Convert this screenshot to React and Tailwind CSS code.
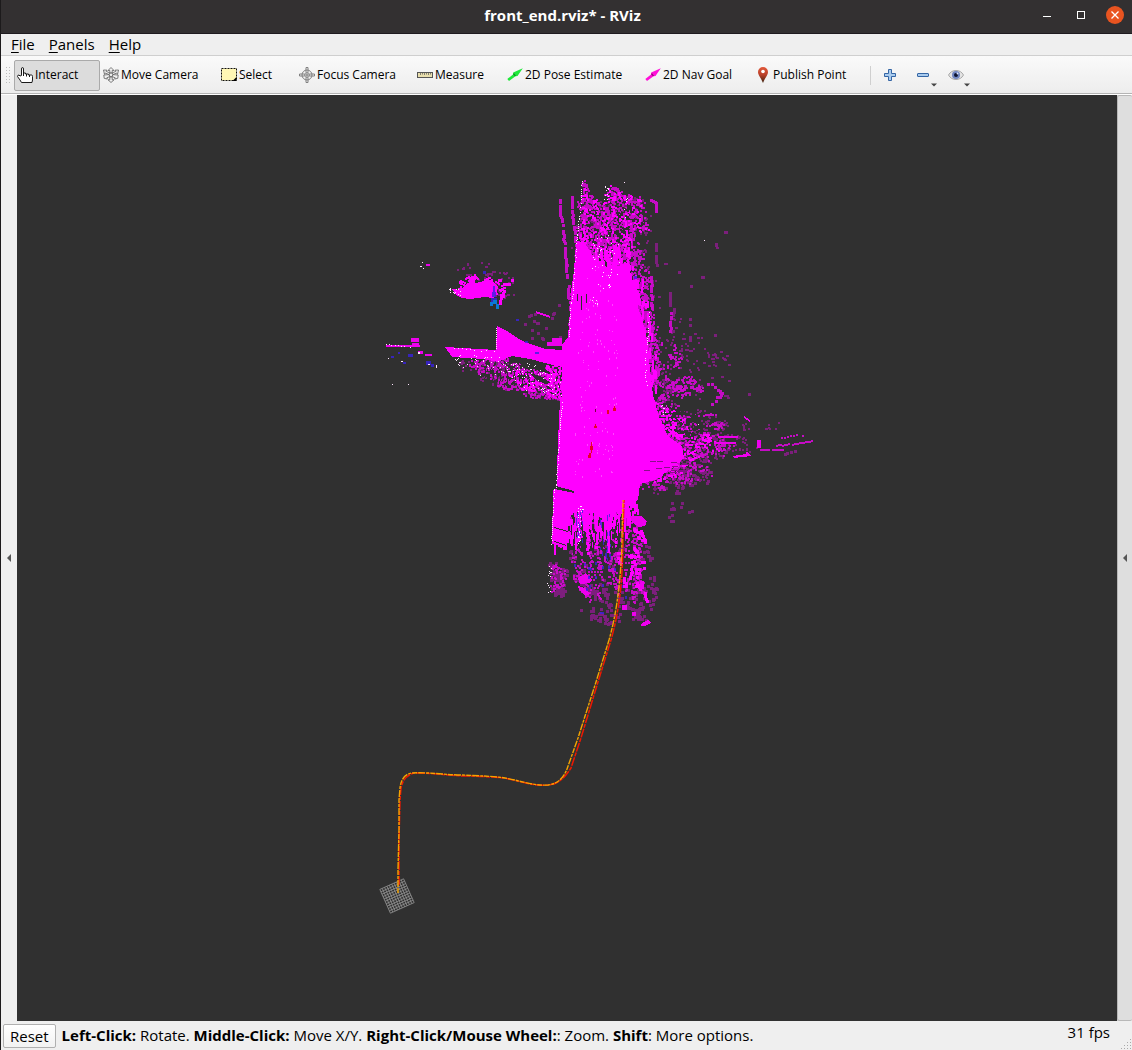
import React from "react";

/* ---------- seeded point cloud ---------- */
function makeRandom(seed) {
  let s = seed;
  return () => {
    s = (s + 0x6d2b79f5) | 0;
    let t = Math.imul(s ^ (s >>> 15), 1 | s);
    t = (t + Math.imul(t ^ (t >>> 7), 61 | t)) ^ t;
    return ((t ^ (t >>> 14)) >>> 0) / 4294967296;
  };
}

function inside(p, x, y) {
  let hit = false;
  for (let i = 0, j = p.length - 1; i < p.length; j = i++) {
    const [xi, yi] = p[i];
    const [xj, yj] = p[j];
    if (yi > y !== yj > y && x < ((xj - xi) * (y - yi)) / (yj - yi) + xi) hit = !hit;
  }
  return hit;
}

const parse = (s) => s.split(" ").map((q) => q.split(",").map(Number));

function bounds(p) {
  const xs = p.map((q) => q[0]);
  const ys = p.map((q) => q[1]);
  const x0 = Math.min(...xs);
  const y0 = Math.min(...ys);
  return [x0, y0, Math.max(...xs) - x0, Math.max(...ys) - y0];
}

function scatter(seed, poly, count, w = 2, h = 2, streak = 0) {
  const rnd = makeRandom(seed);
  const p = parse(poly);
  const [x0, y0, dx, dy] = bounds(p);
  let d = "";
  let n = 0;
  for (let k = 0; n < count && k < count * 12; k++) {
    const x = Math.round(x0 + rnd() * dx);
    const y = Math.round(y0 + rnd() * dy);
    const hh = h + Math.floor(rnd() * streak);
    if (!inside(p, x, y)) continue;
    d += `M${x} ${y}h${w}v${hh}h-${w}z`;
    n++;
  }
  return d;
}

/* small clumps of points, spread sx by sy around each centre */
function clumps(seed, poly, count, sx = 4, sy = 3, per = 5, size = 2) {
  const rnd = makeRandom(seed);
  const p = parse(poly);
  const [x0, y0, dx, dy] = bounds(p);
  let d = "";
  let n = 0;
  for (let k = 0; n < count && k < count * 12; k++) {
    const cx = x0 + rnd() * dx;
    const cy = y0 + rnd() * dy;
    if (!inside(p, cx, cy)) continue;
    n++;
    const m = 1 + Math.floor(rnd() * per);
    for (let i = 0; i < m; i++) {
      const x = Math.round(cx + (rnd() - 0.5) * sx * 2);
      const y = Math.round(cy + (rnd() - 0.5) * sy * 2);
      d += `M${x} ${y}h${size}v${size}h-${size}z`;
    }
  }
  return d;
}

/* points strewn along a polyline */
function trail(seed, line, step, jitter = 1, size = 1, keep = 0.8) {
  const rnd = makeRandom(seed);
  const p = parse(line);
  let d = "";
  for (let i = 1; i < p.length; i++) {
    const [ax, ay] = p[i - 1];
    const [bx, by] = p[i];
    const len = Math.hypot(bx - ax, by - ay);
    for (let t = 0; t < len; t += step) {
      if (rnd() > keep) continue;
      const x = Math.round(ax + ((bx - ax) * t) / len + (rnd() - 0.5) * jitter);
      const y = Math.round(ay + ((by - ay) * t) / len + (rnd() - 0.5) * jitter);
      d += `M${x} ${y}h${size}v${size}h-${size}z`;
    }
  }
  return d;
}

const BG = "#303030";
const HOT = "#ff00ff";
const MID = "#d20ad2";
const DIM = "#8a1c8a";

const CORE =
  "576,243 584,241 590,252 600,264 615,270 626,262 632,276 635,300 642,318 648,345 650,370 653,395 660,420 668,436 682,446 684,458 672,468 655,480 640,484 638,500 630,506 612,512 604,520 592,512 582,514 574,510 569,520 566,546 552,544 553,490 557,488 557,470 558,440 560,400 562,396 562,345 568,337 570,310 571,292 574,270";
const ARM =
  "445,347 496,350 497,326 507,331 519,339 530,344 545,349 564,350 566,368 545,363 530,359 512,356 498,362 484,359 468,358 452,357";
const ISLE = "452,289 460,290 466,284 472,281 476,283 484,281 492,284 498,286 497,293 494,298 484,297 470,299 462,298 456,295";

const TOP = "582,180 588,188 592,198 602,206 607,188 618,190 626,197 642,200 646,214 647,226 630,234 630,270 576,268 578,225";
const RIGHT_NEAR = "640,300 650,310 658,335 660,360 672,378 682,385 672,398 682,412 694,422 704,440 704,455 698,468 672,488 650,492 638,490 636,380";
const RIGHT_FAR = "676,412 712,410 724,425 736,440 734,450 712,460 708,474 690,486 668,482 672,440";

const UNDER = [
  [DIM, clumps(1, "578,196 648,196 650,262 664,300 660,330 640,350 570,310", 150)],
  [DIM, clumps(2, "660,320 680,316 706,345 722,358 716,380 700,400 665,390", 42, 4, 4, 4)],
  [DIM, scatter(80, "690,330 722,340 738,362 732,400 716,400", 16, 3, 2)],
  [DIM, clumps(3, RIGHT_NEAR, 180)],
  [DIM, clumps(4, RIGHT_FAR, 120, 5, 2)],
  [DIM, clumps(5, "655,482 700,470 724,470 716,492 690,512 672,520", 18, 3, 2, 3, 3)],
  [DIM, clumps(6, "740,422 780,418 790,428 770,436 745,458 735,440", 14, 4, 2, 4)],
  [DIM, clumps(7, "558,545 652,545 656,600 640,622 576,618 574,580", 90, 3, 5, 5, 3)],
  [DIM, clumps(8, "549,563 566,567 564,598 549,594", 30, 3, 3, 5, 3)],
  [DIM, clumps(9, "458,262 490,260 512,272 514,290 500,300 470,290", 26, 4, 3, 4)],
  [DIM, clumps(10, "450,360 500,358 552,368 558,398 515,392 478,378 466,370", 75)],
  [DIM, scatter(11, "505,310 536,304 566,296 568,345 530,340", 18, 3, 3)],
  [DIM, "M724 231h4v3h-4zM715 243h3v4h-3zM716 247h3v2h-3zM701 276h4v3h-4zM678 271h3v3h-3zM690 285h3v3h-3zM664 263h4v2h-4zM656 264h3v3h-3zM714 334h3v3h-3zM724 359h3v2h-3zM748 393h3v3h-3z"],
  [MID, clumps(13, TOP, 360, 3, 4, 5)],
  [MID, clumps(14, "628,235 638,235 650,285 654,340 664,375 648,380 634,300", 130, 2, 6, 6)],
  [MID, clumps(15, RIGHT_NEAR, 230)],
  [MID, clumps(16, "664,384 685,376 700,380 705,388 690,392 680,398", 26, 4, 2)],
  [MID, clumps(17, RIGHT_FAR, 65, 5, 1, 5)],
  [MID, clumps(18, "568,505 632,505 640,530 642,560 644,600 630,600 610,590 590,598 574,580", 140, 2, 7, 7)],
  [MID, clumps(19, "466,362 500,358 556,370 560,398 530,396 505,388 490,378", 190, 4, 2)],
  [MID, clumps(20, "550,562 566,568 560,592 551,592", 24, 3, 2, 4)],
  [MID, trail(21, "559,199 559,212 561,220 562,228 564,250 566,276", 2, 1, 3, 0.75)],
  [MID, trail(22, "571,196 571,208 572,220 574,232 575,245", 2, 1, 3, 0.7)],
  [MID, trail(81, "568,283 567,292 569,300 569,340", 2, 2, 3, 0.7)],
  [MID, trail(23, "650,199 655,202 655,212", 2, 1, 3, 0.9)],
  [DIM, trail(82, "655,237 655,262", 3, 1, 3, 0.7)],
  [MID, trail(83, "650,276 651,306", 2, 1, 3, 0.8)],
  [DIM, trail(84, "669,292 669,306", 2, 1, 3, 0.8)],
  [DIM, trail(85, "673,308 672,330", 3, 2, 3, 0.7)],
  [DIM, trail(86, "689,318 689,342", 3, 1, 3, 0.6)],
  [MID, trail(87, "670,312 668,335", 2, 4, 3, 0.6)],
  [MID, trail(88, "776,445 795,443 814,440", 2, 1, 2, 0.9)],
  [MID, trail(89, "778,437 803,434", 3, 1, 2, 0.8)],
  [MID, trail(90, "760,449 783,449", 2, 1, 2, 0.95)],
  [DIM, trail(91, "784,453 786,452 797,450", 4, 1, 3, 0.8)],
  [MID, trail(92, "690,385 712,384 722,392 712,402", 2, 3, 3, 0.7)],
  [MID, clumps(93, "668,346 676,344 682,360 674,368 666,362", 14, 2, 3, 5)],
];

const OVER = [
  [HOT, clumps(24, TOP, 130, 2, 4, 5)],
  [HOT, scatter(25, "574,270 580,240 590,245 630,245 640,300 570,330", 340, 2, 3, 10)],
  [HOT, scatter(33, "632,270 642,276 650,310 656,350 658,390 640,380", 70, 2, 3, 8)],
  [HOT, clumps(26, "640,395 658,400 690,425 700,450 686,470 650,486", 130, 5, 1, 6)],
  [HOT, scatter(27, "552,490 634,490 638,512 612,532 552,546", 360, 2, 4, 9)],
  [HOT, trail(34, "595,510 595,548", 2, 1, 3, 0.9)],
  [HOT, trail(35, "586,508 587,552", 2, 1, 3, 0.9)],
  [HOT, trail(36, "606,508 607,550", 2, 1, 3, 0.9)],
  [HOT, trail(37, "616,508 615,546", 2, 2, 2, 0.8)],
  [HOT, scatter(28, "545,365 562,360 563,399 547,396", 150)],
  [HOT, clumps(32, "505,366 545,372 552,392 520,390", 34, 4, 1, 5)],
  [HOT, clumps(29, "460,278 470,275 498,278 504,290 488,294 458,290", 44, 3, 2, 6)],
  [HOT, clumps(31, "618,540 640,512 646,560 648,600 634,600 614,585", 24, 2, 4, 6, 3)],
  [HOT, clumps(94, "700,432 718,434 720,452 702,448", 14, 6, 1, 5)],
  [HOT, trail(95, "510,280 502,284 500,302", 2, 3, 3, 0.9)],
];

const BRIGHT_BITS =
  "M386 345h34v2h-34zM411 338h8v4h-8zM412 343h7v4h-7zM418 351h5v3h-5zM425 354h7v2h-7zM426 264h4v2h-4zM536 311l14 5v2l-14-5zM547 342h15v4h-15zM552 338h10v8h-10z" +
  "M630 516h11l6 5-2 5-6 1-7-5zM578 578l8-5 6 7-3 3-9 1zM578 586l7 2 5 6-5 2-6-6zM640 581h4v8h-4zM642 623l6-3 3 3-6 3h-4zM632 612h4v4h-4zM622 605h5v5h-5z" +
  "M718 436h20v2h-20zM714 442h22v2h-22zM732 456l14-2 1-3 4 5-17 2zM757 440h4v8h-4zM744 416l6 4v2l-6-4z";

const WHITE = [
  trail(40, "582,181 580,210 577,235 575,262 573,290 570,310 569,337", 2, 1, 1, 0.75),
  trail(41, "562,400 560,425 558,450 556,485 554,490 552,520 551,544", 2, 1, 1, 0.85),
  trail(42, "496,328 496,349", 2, 1),
  trail(43, "450,348 495,351", 4),
  trail(44, "650,310 648,330 646,350 645,375 648,388", 2, 1, 1, 0.6),
  trail(45, "626,197 624,222", 2, 2, 1, 0.6),
  trail(46, "386,344 410,347", 3, 1),
  scatter(47, "604,186 610,186 608,202 604,202", 12, 1, 1),
  scatter(48, "590,238 612,232 622,245 618,290 590,310", 45, 1, 1),
  scatter(50, "500,362 530,362 562,378 562,396 520,390", 75, 1, 1),
  scatter(51, "450,353 500,356 520,366 490,378 460,370", 42, 1, 1),
  scatter(52, "448,286 462,290 460,296 450,292", 14, 1, 1),
  scatter(53, "578,505 584,505 580,545 577,545", 24, 1, 1),
  scatter(54, "546,562 552,562 550,596 546,592", 13, 1, 1),
  scatter(55, "660,404 667,406 666,416 662,414", 8, 1, 1),
  "M422 262h1v1h-1zM420 266h2v1h-2zM423 268h1v1h-1zM392 384h1v1h-1zM408 384h1v1h-1zM704 240h1v1h-1zM624 182h1v1h-1zM388 358h1v1h-1zM401 361h2v1h-2zM428 364h2v1h-2zM436 365h1v3h-1zM698 424h1v1h-1zM418 352h2v2h-2z",
].join("");

const FAINT = scatter(49, "592,240 618,240 618,360 614,480 572,480 578,340", 130, 1, 1, 2);

const BLUE = [
  scatter(60, "574,505 584,505 582,548 576,548", 14, 1, 3, 3),
  scatter(61, "600,512 612,512 610,560 600,560", 18, 1, 3, 4),
  scatter(62, "572,560 602,560 626,575 628,600 575,590", 15, 2, 3),
  "M492 292h4v5h-4zM491 298h6v6h-6zM493 286h2v6h-2zM483 271h3v3h-3zM525 341h3v2h-3zM535 352h4v2h-4zM600 612h4v2h-4zM408 354h5v3h-5zM426 361h5v4h-5zM431 364h3v3h-3zM391 356h3v2h-3zM403 362h3v2h-3zM516 319h3v2h-3zM398 352h2v2h-2zM634 276h3v3h-3z",
].join("");

const ROUTE =
  "M398 893L398 870L399 830L399 800L400 788C401 779 405 774 412 773C430 772 445 775 462 775C480 776 492 776 505 778C522 781 533 786 548 785C558 784 564 777 567 769L578 738L596 682L609 640C614 622 616 610 618 595C620 580 622 555 622 535L623 500";
const ROUTE_RED =
  "M399 885L399 840L400 800L401 788C403 779 407 775 414 773C432 773 445 775 462 776C480 776 492 777 505 778C522 782 533 786 548 785C558 784 564 779 571 768L581 738L598 682L611 640C616 622 618 610 620 595C622 580 623 555 623 535L624 500";

function Grid() {
  const lines = [];
  for (let i = 0; i <= 10; i++) {
    const t = i * 2.6 - 13;
    lines.push(`M${t} -13V13M-13 ${t}H13`);
  }
  return (
    <path
      d={lines.join("")}
      transform="translate(397 896) rotate(-24)"
      stroke="#8c8c8c"
      strokeWidth="0.8"
      fill="none"
    />
  );
}

function PointCloudView() {
  return (
    <svg
      viewBox="17 96 1100 925"
      preserveAspectRatio="xMidYMid meet"
      className="block h-auto w-full"
      role="img"
      aria-label="3D view"
    >
      <Grid />
      <g shapeRendering="crispEdges">
        {UNDER.map(([c, d], i) => (
          <path key={i} d={d} fill={c} opacity={c === DIM ? 0.85 : 0.92} />
        ))}
        <polygon points={CORE} fill={HOT} />
        <polygon points={ARM} fill={HOT} />
        <polygon points={ISLE} fill={HOT} />
        {OVER.map(([c, d], i) => (
          <path key={i} d={d} fill={c} />
        ))}
        <path d={BRIGHT_BITS} fill="#ee00ee" />
        <path d={scatter(70, "570,525 628,518 622,545 570,548", 26, 1, 4, 12)} fill={BG} />
        <path d={clumps(71, "584,205 640,205 644,245 582,240", 26, 3, 2, 4)} fill={BG} />
        <path d={scatter(72, "640,460 690,458 686,472 645,476", 14, 6, 1)} fill="#8a0f8a" />
        <path d={clumps(73, "662,395 685,405 700,425 695,438 676,430", 22, 4, 2, 5)} fill={BG} />
        <path
          d="M517 360l12 2 10 4 11 6v2l-14-4-10-5-12-3zM530 373l12 4 9 6-6 1-9-4zM556 486l18 5v2l-19-4zM577 294h1v7h-1zM581 296h1v14h-1zM586 294h1v9h-1zM554 527l14 4v1l-14-4zM554 541l12 4v1l-12-4z"
          fill={BG}
        />
        <path
          d="M484 366q4 7 0 14M491 367q5 6 1 15M498 367q5 7 1 17M505 368q5 8 1 18M513 369q4 8 1 17M520 371q5 7 1 16M527 373q4 7 1 14"
          fill="none"
          stroke={BG}
        />
        <path d={BLUE} fill="#3a22e0" opacity="0.8" />
        <path d="M493 300h4v4h-4zM496 304h3v5h-3zM490 302h3v4h-3z" fill="#0a78d8" />
        <path d={FAINT} fill="#ff70ff" opacity="0.6" />
        <path d={WHITE} fill="#ffe6ff" />
        <path
          d="M613 408h3v3h-3zM614 406h1v2h-1zM607 410h2v4h-2zM595 424h1v2h-1zM594 426h3v2h-3zM591 442h1v4h-1zM590 446h3v4h-3zM591 450h1v3h-1zM588 455h3v3h-3zM589 453h2v2h-2z"
          fill="#e8002a"
        />
        <path d="M595 409h1v3h-1z" fill="#7a0040" />
      </g>
      <path d={ROUTE_RED} fill="none" stroke="#f01800" strokeWidth="1.5" strokeDasharray="9 1 4 1" />
      <path d={ROUTE} fill="none" stroke="#f5a400" strokeWidth="1.4" strokeDasharray="5 1 7 1 3 1" />
    </svg>
  );
}

/* ---------- toolbar icons ---------- */
const Svg = ({ children, className = "size-4" }) => (
  <svg viewBox="0 0 16 16" className={`${className} shrink-0`} aria-hidden="true">
    {children}
  </svg>
);

const HandIcon = () => (
  <Svg>
    <path
      d="M4.500 8.500V2Q4.500.5 5.500.5T6.500 2v4h2v1h3v1h3q1 0 1 1.500V13l-.5 2.500H4.500L3 13 .5 9.500Q.5 8 2 8l1 1z"
      fill="#fff"
      stroke="#1a1a1a"
    />
    <path d="M6.500 6v3M9.500 7v2.500M12.500 8v2" stroke="#1a1a1a" fill="none" />
  </Svg>
);
const MoveIcon = () => (
  <Svg>
    <g fill="#f0f0f0" stroke="#5e5e5e" strokeWidth="0.8">
      <path d="M8 .5L11 3.500H9.200v2.500H6.800V3.500H5zM8 15.500l-3-2.700h1.800V10h2.400v2.800H11z" />
      <path d="M.5 3l3.500.2-.8 1.200L7 6 6 7.600 2.400 6 1.500 7.400zM15.500 3l-3.500.2.8 1.200L9 6l1 1.600L13.600 6l.9 1.400z" />
      <path d="M.8 8L6 7.600 7 9.500l-3.200 1.300.6 1.300-3.200-.8zM15.200 8L10 7.600 9 9.500l3.200 1.300-.6 1.300 3.200-.8z" />
      <circle cx="8" cy="7.800" r="1.800" />
    </g>
  </Svg>
);
const SelectIcon = () => (
  <Svg>
    <rect x="0.5" y="1.500" width="15" height="12" fill="#fff7b5" stroke="#111" strokeDasharray="2 1" />
    <path d="M15.500 10v4h-4z" fill="#000" />
  </Svg>
);
const FocusIcon = () => (
  <Svg>
    <g fill="none" stroke="#808080">
      <circle cx="8" cy="8" r="5" />
      <circle cx="8" cy="8" r="2.500" />
      <path d="M7 5V.5h2V5M7 11v4.500h2V11M5 7H.5v2H5M11 7h4.500v2H11M8 6v4M6 8h4" />
    </g>
  </Svg>
);
const MeasureIcon = () => (
  <Svg>
    <rect x="0.5" y="5.500" width="15" height="5" fill="#e9dfae" stroke="#555" />
    <path d="M3.500 6v2M5.500 6v1.500M7.500 6v2M9.500 6v1.500M11.500 6v2M13.500 6v1.500" stroke="#555" strokeWidth="0.7" />
  </Svg>
);
const ArrowIcon = ({ color, dark }) => (
  <Svg>
    <path d="M.3 12L6 7.500 6.200 5.500 15.800 1.200 10.500 9 8.500 9.300 2 14z" fill={color} />
    <path d="M6.800 6L9 8.700 8 9.200 6.200 7.500z" fill={dark} />
  </Svg>
);
const PinIcon = () => (
  <Svg>
    <defs>
      <linearGradient id="pin" x1="0" x2="0" y1="0" y2="1">
        <stop offset="0" stopColor="#e2593b" />
        <stop offset="0.5" stopColor="#b8402a" />
        <stop offset="1" stopColor="#3a2410" />
      </linearGradient>
    </defs>
    <path d="M8 0a5 5 0 0 1 5 5c0 3-3 6-5 11C6 11 3 8 3 5a5 5 0 0 1 5-5z" fill="url(#pin)" />
    <circle cx="8" cy="4.500" r="1.800" fill="#fff" />
  </Svg>
);
const PlusIcon = () => (
  <Svg>
    <path d="M6.500 2.500h3v4h4v3h-4v4h-3v-4h-4v-3h4z" fill="#a9cbee" stroke="#3465a4" strokeLinejoin="round" />
  </Svg>
);
const MinusIcon = () => (
  <Svg>
    <rect x="2.500" y="6.500" width="11" height="3" rx="0.500" fill="#a9cbee" stroke="#3465a4" />
  </Svg>
);
const EyeIcon = () => (
  <Svg>
    <path d="M0.500 8Q3 3.500 8 3.500T15.500 8Q13 12.500 8 12.500T.5 8z" fill="#e4e4e4" stroke="#a8a8a8" />
    <circle cx="8" cy="8" r="4" fill="#7086c0" />
    <circle cx="8" cy="8" r="2" fill="#0c1330" />
    <circle cx="9.500" cy="6.500" r="0.900" fill="#dfe8ff" />
  </Svg>
);
const Caret = () => (
  <svg viewBox="0 0 6 4" className="absolute -right-1.5 -bottom-1 h-1 w-1.5" aria-hidden="true">
    <path d="M0 .5h6L3 3.500z" fill="#444" />
  </svg>
);

const TOOLS = [
  { label: "Interact", icon: <HandIcon />, width: "w-[86px]", active: true },
  { label: "Move Camera", icon: <MoveIcon />, width: "w-[118px]" },
  { label: "Select", icon: <SelectIcon />, width: "w-[78px]" },
  { label: "Focus Camera", icon: <FocusIcon />, width: "w-[118px]" },
  { label: "Measure", icon: <MeasureIcon />, width: "w-[90px]" },
  { label: "2D Pose Estimate", icon: <ArrowIcon color="#1fe83a" dark="#0b8f22" />, width: "w-[138px]" },
  { label: "2D Nav Goal", icon: <ArrowIcon color="#ff10d8" dark="#8a0a78" />, width: "w-[110px]" },
  { label: "Publish Point", icon: <PinIcon />, width: "w-[114px]" },
];

export default function App() {
  return (
    <div className="flex min-h-screen flex-col border-l border-[#1c1a1b] bg-[#efefef] font-['Open_Sans','Noto_Sans',sans-serif] text-[15px] text-black">
      <header className="grid h-[34px] grid-cols-[1fr_auto_1fr] items-center border-b border-[#1f1b1f] bg-[#333031] pr-2 pb-1 text-white">
        <span />
        <h1 className="text-[15px] leading-4 font-bold">front_end.rviz* - RViz</h1>
        <div className="flex items-center justify-end gap-4">
          <button aria-label="Minimize" className="flex size-[18px] items-center justify-center">
            <span className="mt-1 h-px w-2 bg-white" />
          </button>
          <button aria-label="Maximize" className="flex size-[18px] items-center justify-center">
            <span className="size-2 border border-white" />
          </button>
          <button aria-label="Close" className="flex size-[18px] items-center justify-center rounded-full bg-[#e95420]">
            <svg viewBox="0 0 8 8" className="size-2" aria-hidden="true">
              <path d="M.5 .5l7 7M7.500 .5l-7 7" stroke="#fff" strokeWidth="1.300" />
            </svg>
          </button>
        </div>
      </header>

      <nav className="flex h-[22px] items-center gap-3.5 border-b border-[#cfcfcf] px-2.5 pb-px leading-5">
        {["File", "Panels", "Help"].map((m) => (
          <button key={m}>
            <span className="underline decoration-1 underline-offset-2">{m[0]}</span>
            {m.slice(1)}
          </button>
        ))}
      </nav>

      <div
        role="toolbar"
        className="flex h-[38px] items-center border-b border-[#b4b4b4] bg-linear-to-b from-[#fafafa] to-[#ededed] pt-px pl-1 text-xs"
      >
        <svg viewBox="0 0 9 18" className="h-[18px] w-[9px] shrink-0" aria-hidden="true">
          <path d="M1.500 1v17M4.500 1v17" stroke="#bdbdbd" strokeDasharray="1 2" />
        </svg>
        {TOOLS.map((t) => (
          <button
            key={t.label}
            aria-pressed={!!t.active}
            className={`${t.width} flex h-[31px] shrink-0 items-center gap-0.5 rounded-xs border pl-0.5 whitespace-nowrap ${
              t.active ? "border-[#aaaaaa] bg-[#dcdcdc]" : "border-transparent"
            }`}
          >
            {t.icon}
            {t.label}
          </button>
        ))}
        <span className="mr-[11px] ml-1 h-[19px] w-px shrink-0 bg-[#cfcfcf]" />
        <div className="flex items-center gap-[17px]">
          <button aria-label="Add tool" className="relative">
            <PlusIcon />
          </button>
          <button aria-label="Remove tool" className="relative">
            <MinusIcon />
            <Caret />
          </button>
          <button aria-label="Views" className="relative">
            <EyeIcon />
            <Caret />
          </button>
        </div>
      </div>

      <main className="flex grow border-t border-white">
        <button aria-label="Show left panel" className="flex w-4 shrink-0 items-center justify-center">
          <svg viewBox="0 0 4 8" className="h-2 w-1" aria-hidden="true">
            <path d="M4 0v8L0 4z" fill="#555" />
          </svg>
        </button>
        <div className="min-w-0 grow bg-[#303030] pt-px">
          <PointCloudView />
        </div>
        <button
          aria-label="Show right panel"
          className="flex w-[15px] shrink-0 items-center justify-center rounded-xs border border-r-0 border-[#b8b8b8] bg-[#dedede]"
        >
          <svg viewBox="0 0 4 8" className="h-2 w-1" aria-hidden="true">
            <path d="M4 0v8L0 4z" fill="#555" />
          </svg>
        </button>
      </main>

      <footer className="flex h-[29px] items-center pl-0.5">
        <button className="h-6 shrink-0 rounded-xs border border-[#b0b0b0] bg-linear-to-b from-white to-[#f2f2f2] px-1.5 leading-5">
          Reset
        </button>
        <p className="ml-1.5 grow whitespace-nowrap">
          <b>Left-Click:</b> Rotate. <b>Middle-Click:</b> Move X/Y. <b>Right-Click/Mouse Wheel:</b>: Zoom. <b>Shift</b>: More
          options.
        </p>
        <span className="mr-2.5 mb-1.5">31 fps</span>
        <svg viewBox="0 0 12 12" className="size-3 self-end" aria-hidden="true">
          <path d="M10 1h1v1h-1zM10 4h1v1h-1zM10 7h1v1h-1zM10 10h1v1h-1zM7 4h1v1h-1zM7 7h1v1h-1zM7 10h1v1h-1zM4 7h1v1h-1zM4 10h1v1h-1zM1 10h1v1h-1z" fill="#aaa" />
        </svg>
      </footer>
    </div>
  );
}
